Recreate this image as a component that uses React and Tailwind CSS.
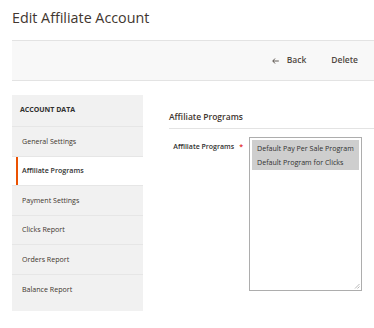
import React from 'react';

const navItems = [
  'General Settings',
  'Affiliate Programs',
  'Payment Settings',
  'Clicks Report',
  'Orders Report',
  'Balance Report',
];

export default function App() {
  return (
    <div className="w-[374px] h-[328px] overflow-hidden bg-white font-['Open_Sans',sans-serif] text-[#303030]">
      <div className="pl-3 pt-[8px]">
        <h1 className="text-[14.3px] leading-[20px] text-[#41362f]">Edit Affiliate Account</h1>
      </div>

      <div className="ml-3 mt-3 h-[41px] bg-[#f8f8f8] border-y border-[#e3e3e3] flex items-center justify-end pr-4 gap-[25px] text-[8.5px] font-semibold text-[#514943]">
        <div className="flex items-center gap-[8px]">
          <svg width="7" height="6" viewBox="0 0 7 6" className="text-[#514943]">
            <path d="M3 0.5 L0.8 3 L3 5.5 M0.8 3 H6.8" fill="none" stroke="currentColor" strokeWidth="0.9" />
          </svg>
          <span>Back</span>
        </div>
        <span>Delete</span>
      </div>

      <div className="flex mt-[14px] pl-3">
        <div className="w-[131px] bg-[#f1f1f1] pb-[7px]">
          <div className="h-[32px] flex items-center pl-2 text-[7px] font-bold uppercase border-b border-[#e6e6e6]">
            Account Data
          </div>
          {navItems.map((item, i) =>
            item === 'Affiliate Programs' ? (
              <div key={item} className="h-[29.5px] bg-white pl-1 border-b border-[#e6e6e6] flex">
                <div className="border-l-2 border-[#eb5202] flex items-center pl-[4px] text-[7.1px] font-semibold text-[#303030]">
                  {item}
                </div>
              </div>
            ) : (
              <div
                key={item}
                className={`h-[29.5px] flex items-center pl-[10px] text-[7.1px] text-[#41362f] ${i < navItems.length - 1 ? 'border-b border-[#e6e6e6]' : ''}`}
              >
                {item}
              </div>
            )
          )}
        </div>

        <div className="flex-1 ml-[26px]">
          <div className="pt-[16px] pb-[5px] border-b border-[#e3e3e3] text-[8.5px] leading-[12px] font-semibold text-[#41362f]">
            Affiliate Programs
          </div>
          <div className="flex mt-[8px]">
            <div className="w-[80px] flex justify-end pr-[6px] pt-[5px] text-[7px] leading-[10px] font-semibold text-[#303030]">
              <span>Affiliate Programs</span>
              <span className="ml-[5px] text-[#e22626]">*</span>
            </div>
            <div className="relative w-[113px] h-[154px] border border-[#adadad] p-[2px] text-[7.1px] text-[#303030] whitespace-nowrap">
              <div className="bg-[#cecece] pl-[5px] py-[1px]">
                <div className="h-[14px] flex items-center">Default Pay Per Sale Program</div>
                <div className="h-[14px] flex items-center">Default Program for Clicks</div>
              </div>
              <svg width="6" height="6" viewBox="0 0 6 6" className="absolute right-[1px] bottom-[1px]">
                <path d="M5.5 1 L1 5.5 M5.5 3.5 L3.5 5.5" stroke="#9a9a9a" strokeWidth="0.7" />
              </svg>
            </div>
          </div>
        </div>
      </div>
    </div>
  );
}
